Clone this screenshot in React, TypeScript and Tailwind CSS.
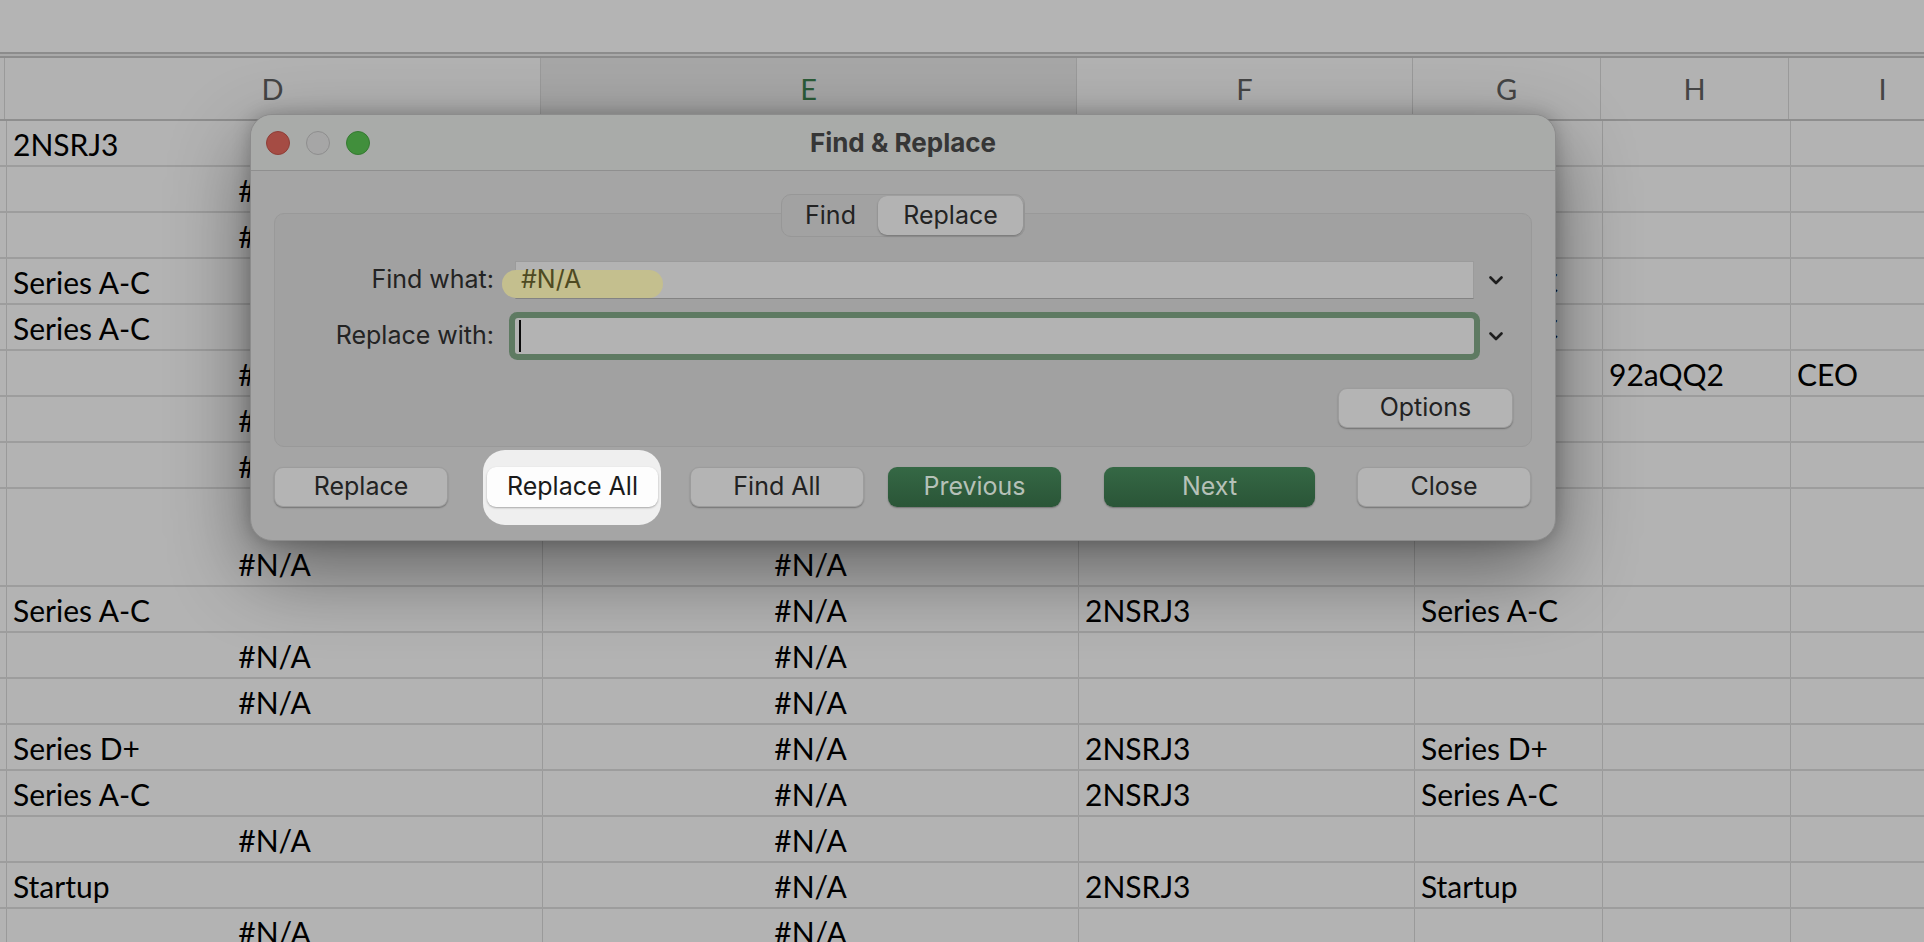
import React from 'react';

type Cell = { t: string; c?: boolean };
type Row = { h: string; cells: Record<string, Cell> };

const COLS = [
  { key: 'C', w: 'w-[5px]' },
  { key: 'D', w: 'w-[536px]' },
  { key: 'E', w: 'w-[536px]' },
  { key: 'F', w: 'w-[336px]' },
  { key: 'G', w: 'w-[188px]' },
  { key: 'H', w: 'w-[188px]' },
  { key: 'I', w: 'w-[188px]' },
];

const NA: Cell = { t: '#N/A', c: true };
const ROW = 'h-[46px]';

// rows 1-8 sit mostly under the dialog, only what peeks out is filled in
const ROWS: Row[] = [
  { h: ROW, cells: { D: { t: '2NSRJ3' } } },
  { h: ROW, cells: { D: NA } },
  { h: ROW, cells: { D: NA } },
  { h: ROW, cells: { D: { t: 'Series A-C' }, G: { t: 'Series A-C' } } },
  { h: ROW, cells: { D: { t: 'Series A-C' }, G: { t: 'Series A-C' } } },
  { h: ROW, cells: { D: NA, H: { t: '92aQQ2' }, I: { t: 'CEO' } } },
  { h: ROW, cells: { D: NA } },
  { h: ROW, cells: { D: NA } },
  { h: 'h-[98px]', cells: { D: NA, E: NA } },
  { h: ROW, cells: { D: { t: 'Series A-C' }, E: NA, F: { t: '2NSRJ3' }, G: { t: 'Series A-C' } } },
  { h: ROW, cells: { D: NA, E: NA } },
  { h: ROW, cells: { D: NA, E: NA } },
  { h: ROW, cells: { D: { t: 'Series D+' }, E: NA, F: { t: '2NSRJ3' }, G: { t: 'Series D+' } } },
  { h: ROW, cells: { D: { t: 'Series A-C' }, E: NA, F: { t: '2NSRJ3' }, G: { t: 'Series A-C' } } },
  { h: ROW, cells: { D: NA, E: NA } },
  { h: ROW, cells: { D: { t: 'Startup' }, E: NA, F: { t: '2NSRJ3' }, G: { t: 'Startup' } } },
  { h: ROW, cells: { D: NA, E: NA } },
];

function GridCell({ w, cell }: { w: string; cell?: Cell }) {
  return (
    <div
      className={`${w} shrink-0 h-full border-r border-[#9a9a9a] flex items-end pb-[3px] ${
        cell?.c ? 'justify-center' : 'pl-[6px]'
      }`}
    >
      {cell && <span className="leading-[36px] whitespace-nowrap">{cell.t}</span>}
    </div>
  );
}

function Chevron() {
  return (
    <svg width="14" height="9" viewBox="0 0 14 9">
      <path
        d="M1.5 1.5 L7 7 L12.5 1.5"
        fill="none"
        stroke="#1e1e1e"
        strokeWidth="2.6"
        strokeLinecap="round"
        strokeLinejoin="round"
      />
    </svg>
  );
}

const grayBtn =
  'h-[40px] rounded-[9px] bg-[#b4b4b4] border border-[#9c9c9c] shadow-[0_1px_1.5px_rgba(0,0,0,0.3)] flex items-center justify-center text-[#222]';
const greenBtn =
  'h-[40px] rounded-[9px] bg-gradient-to-b from-[#356845] to-[#2a5537] shadow-[0_1px_1.5px_rgba(0,0,0,0.3)] flex items-center justify-center text-[#b6c1b8]';

function FindReplaceDialog() {
  return (
    <div className="absolute left-[250px] top-[114px] w-[1306px] h-[427px] rounded-[22px] bg-[#a5a5a5] border border-[#8c8c8c] shadow-[0_30px_80px_rgba(0,0,0,0.45),0_0_18px_rgba(0,0,0,0.22)] overflow-hidden font-['Inter',sans-serif] text-[25px] text-[#232323]">
      {/* title bar */}
      <div className="h-[56px] bg-[#a9aba9] border-b border-[#8f8f8f] grid grid-cols-[1fr_auto_1fr] items-center">
        <div className="flex items-center gap-[16px] pl-[15px]">
          <span className="w-[24px] h-[24px] rounded-full bg-[#a54c44] border border-[#8f3e37]" />
          <span className="w-[24px] h-[24px] rounded-full bg-[#a6a6a6] border border-[#8e8e8e]" />
          <span className="w-[24px] h-[24px] rounded-full bg-[#418f3c] border border-[#357a31]" />
        </div>
        <div className="text-[26px] font-bold text-[#363636]">Find &amp; Replace</div>
        <div />
      </div>

      <div className="px-[23px] pt-[23px]">
        {/* segmented control */}
        <div className="relative z-10 flex justify-center -mb-[24px]">
          <div className="w-[244px] h-[43px] rounded-[10px] bg-[#a2a2a2] border border-[#979797] flex items-center p-[1px]">
            <div className="flex-1 text-center">Find</div>
            <div className="w-[145px] h-full rounded-[9px] bg-[#b3b3b3] shadow-[0_1px_2px_rgba(0,0,0,0.3)] flex items-center justify-center">
              Replace
            </div>
          </div>
        </div>

        {/* grouped panel */}
        <div className="h-[234px] rounded-[10px] bg-[#a1a1a1] border border-[#999999] pt-[47px]">
          <div className="flex items-center h-[38px]">
            <div className="w-[219px] text-right">Find what:</div>
            <div className="ml-[21px] flex-1 h-full relative bg-[#b3b3b3] border border-[#9b9b9b] border-b-[#838383] flex items-center">
              <span className="absolute -left-[14px] top-[8px] w-[161px] h-[28px] rounded-full bg-[#c4bf8e]" />
              <span className="relative pl-[5px] text-[#4e4a22]">#N/A</span>
            </div>
            <div className="w-[57px] pl-[15px] flex items-center">
              <Chevron />
            </div>
          </div>

          <div className="flex items-center h-[36px] mt-[19px]">
            <div className="w-[219px] text-right">Replace with:</div>
            <div className="ml-[21px] flex-1 h-full relative bg-[#b3b3b3] rounded-[3px] ring-[6px] ring-[#5e7a62]">
              <span className="absolute left-[4px] top-[2px] w-[2px] h-[32px] bg-[#0a0a0a]" />
            </div>
            <div className="w-[57px] pl-[15px] flex items-center">
              <Chevron />
            </div>
          </div>

          <div className="flex justify-end pr-[18px] mt-[34px]">
            <div className={`${grayBtn} w-[175px]`}>Options</div>
          </div>
        </div>

        {/* bottom buttons */}
        <div className="flex mt-[20px]">
          <div className={`${grayBtn} w-[174px]`}>Replace</div>
          <div className="relative ml-[39px] w-[171px] h-[40px]">
            <div className="absolute -left-[4px] -right-[3px] -top-[17px] -bottom-[18px] rounded-[22px] bg-[#efefef]" />
            <div className="relative h-full rounded-[9px] bg-[#fdfdfd] shadow-[0_1px_2px_rgba(0,0,0,0.3)] flex items-center justify-center text-[#1a1a1a]">
              Replace All
            </div>
          </div>
          <div className={`${grayBtn} ml-[32px] w-[174px]`}>Find All</div>
          <div className={`${greenBtn} ml-[24px] w-[173px]`}>Previous</div>
          <div className={`${greenBtn} ml-[43px] w-[211px]`}>Next</div>
          <div className={`${grayBtn} ml-[42px] w-[174px]`}>Close</div>
        </div>
      </div>
    </div>
  );
}

export default function App() {
  return (
    <div className="relative w-[1924px] h-[942px] overflow-hidden bg-[#b3b3b3] font-['Lato',sans-serif] text-[30px] text-black">
      {/* toolbar strip */}
      <div className="h-[52px] bg-[#b4b4b4]" />
      <div className="h-[6px] border-y-2 border-[#8c8c8c] bg-[#a9a9a9]" />

      {/* column headers */}
      <div className="h-[63px] flex border-b-2 border-[#8e8e8e] text-[29px] text-[#454545]">
        {COLS.map((col) => (
          <div
            key={col.key}
            className={`${col.w} shrink-0 h-full border-r border-[#9a9a9a] flex items-center justify-center ${
              col.key === 'E' ? 'bg-[#a7a7a7] text-[#2b5b38]' : 'bg-[#b2b2b2]'
            }`}
          >
            {col.key === 'C' ? '' : col.key}
          </div>
        ))}
      </div>

      {/* cells */}
      {ROWS.map((row, i) => (
        <div key={i} className={`${row.h} flex border-b-2 border-[#9d9d9d]`}>
          {COLS.map((col) => (
            <GridCell key={col.key} w={col.w} cell={row.cells[col.key]} />
          ))}
        </div>
      ))}

      <FindReplaceDialog />
    </div>
  );
}
